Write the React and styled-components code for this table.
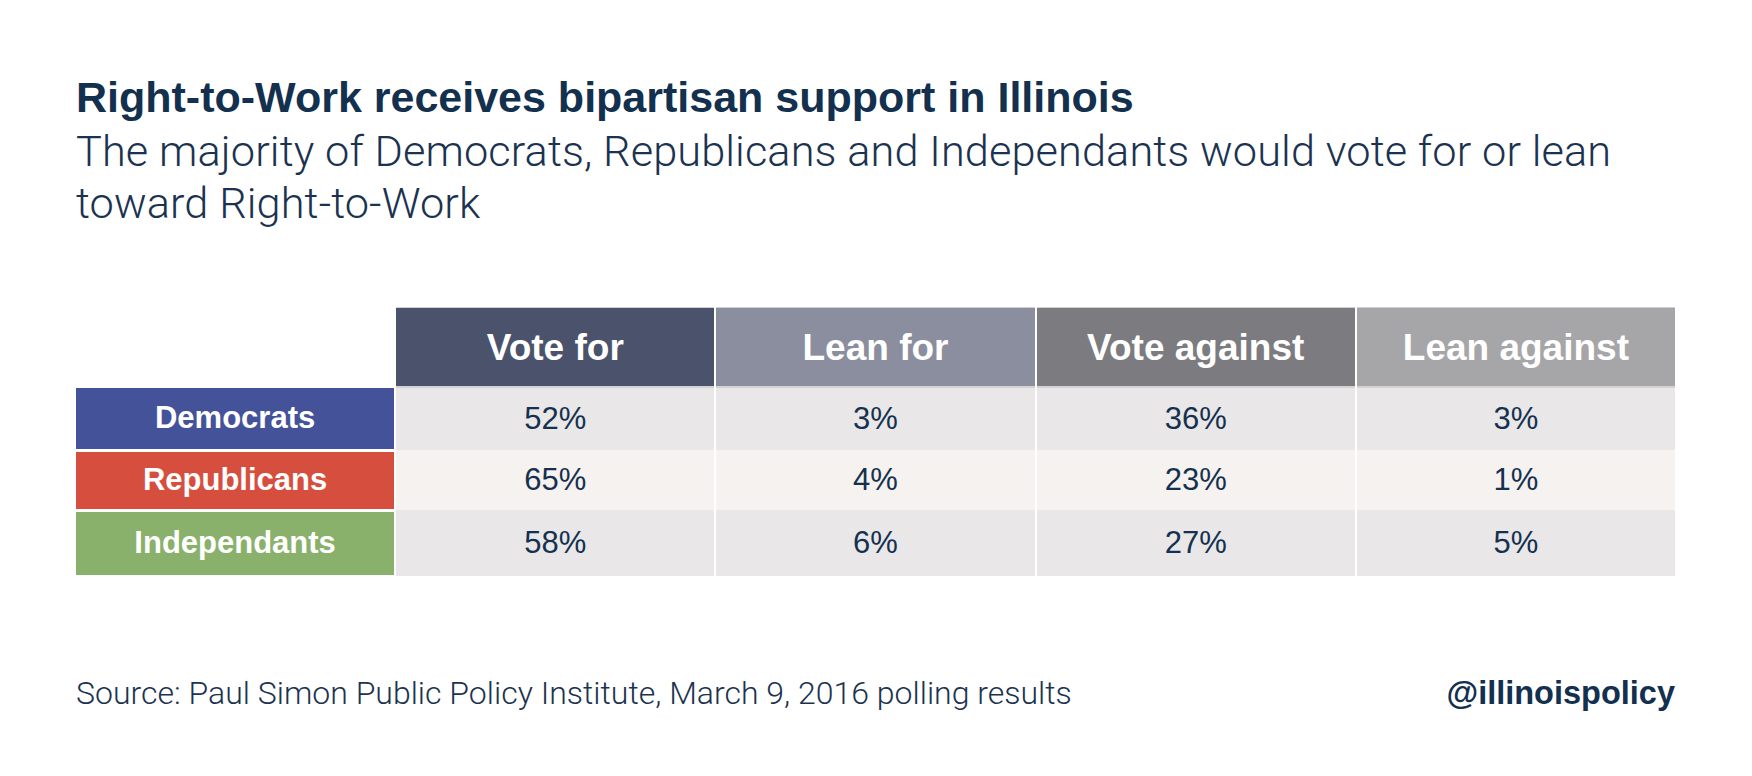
import React from "react";
import styled, { createGlobalStyle } from "styled-components";

const GlobalStyle = createGlobalStyle`
  html, body {
    margin: 0;
    padding: 0;
    background: #ffffff;
  }
`;

const columns = [
  { label: "Vote for", bg: "#4b526c" },
  { label: "Lean for", bg: "#8a8e9e" },
  { label: "Vote against", bg: "#7c7b80" },
  { label: "Lean against", bg: "#a6a6a8" },
];

const rows = [
  { party: "Democrats", bg: "#44529a", shade: "#e9e7e8", height: 62, values: ["52%", "3%", "36%", "3%"] },
  { party: "Republicans", bg: "#d64e3d", shade: "#f5f2ef", height: 60, values: ["65%", "4%", "23%", "1%"] },
  { party: "Independants", bg: "#89b16b", shade: "#e9e7e8", height: 66, values: ["58%", "6%", "27%", "5%"] },
];

const Page = styled.div`
  width: 1752px;
  height: 776px;
  box-sizing: border-box;
  padding: 72px 77px 0 76px;
  font-family: "Liberation Sans", Arial, sans-serif;
  color: #15314f;
`;

const Title = styled.h1`
  margin: 0;
  font-size: 43px;
  line-height: 50px;
  font-weight: 700;
  color: #13304f;
`;

const Subtitle = styled.p`
  margin: 4px 0 0;
  font-family: Roboto, "Liberation Sans", sans-serif;
  font-size: 43.3px;
  line-height: 52.3px;
  font-weight: 300;
  letter-spacing: 0.1px;
  color: #1b3350;
`;

const Table = styled.div`
  display: grid;
  grid-template-columns: repeat(5, 1fr);
  grid-template-rows: 81px ${rows.map((r) => `${r.height}px`).join(" ")};
  column-gap: 2px;
  margin-top: 76px;
`;

const Corner = styled.div``;

const HeaderCell = styled.div`
  display: flex;
  align-items: center;
  justify-content: center;
  box-sizing: border-box;
  background: ${(p) => p.$bg};
  border-top: 1px solid #cfcfd2;
  border-bottom: 2px solid #d3d3d6;
  color: #ffffff;
  font-size: 37px;
  font-weight: 700;
  padding-top: 2px;
`;

const LabelCell = styled.div`
  display: flex;
  align-items: center;
  justify-content: center;
  margin: ${(p) => (p.$first ? "0 0 1px" : "2px 0 1px")};
  background: ${(p) => p.$bg};
  color: #ffffff;
  font-size: 31px;
  font-weight: 700;
`;

const DataCell = styled.div`
  display: flex;
  align-items: center;
  justify-content: center;
  background: ${(p) => p.$shade};
  color: #15314f;
  font-size: 31px;
  font-weight: 400;
`;

const Footer = styled.div`
  display: flex;
  justify-content: space-between;
  align-items: baseline;
  margin-top: 98px;
`;

const Source = styled.span`
  font-family: Roboto, "Liberation Sans", sans-serif;
  font-size: 32px;
  line-height: 38px;
  font-weight: 300;
  color: #1b3350;
`;

const Handle = styled.span`
  font-size: 32.5px;
  line-height: 38px;
  font-weight: 700;
  color: #13304f;
`;

export default function App() {
  return (
    <>
      <GlobalStyle />
      <Page>
        <Title>Right-to-Work receives bipartisan support in Illinois</Title>
        <Subtitle>
          The majority of Democrats, Republicans and Independants would vote for or lean
          <br />
          toward Right-to-Work
        </Subtitle>
        <Table>
          <Corner />
          {columns.map((c) => (
            <HeaderCell key={c.label} $bg={c.bg}>
              {c.label}
            </HeaderCell>
          ))}
          {rows.map((r, i) => (
            <React.Fragment key={r.party}>
              <LabelCell $bg={r.bg} $first={i === 0}>
                {r.party}
              </LabelCell>
              {r.values.map((v, j) => (
                <DataCell key={j} $shade={r.shade}>
                  {v}
                </DataCell>
              ))}
            </React.Fragment>
          ))}
        </Table>
        <Footer>
          <Source>Source: Paul Simon Public Policy Institute, March 9, 2016 polling results</Source>
          <Handle>@illinoispolicy</Handle>
        </Footer>
      </Page>
    </>
  );
}
